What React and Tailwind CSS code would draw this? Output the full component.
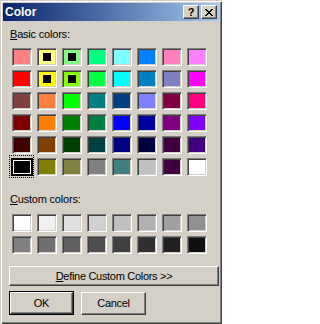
import React from 'react';

const BASIC = [
  ['#ff8080', '#ffff80', '#80ff80', '#00ff80', '#80ffff', '#0080ff', '#ff80c0', '#ff80ff'],
  ['#ff0000', '#ffff00', '#80ff00', '#00ff40', '#00ffff', '#0080c0', '#8080c0', '#ff00ff'],
  ['#804040', '#ff8040', '#00ff00', '#008080', '#004080', '#8080ff', '#800040', '#ff0080'],
  ['#800000', '#ff8000', '#008000', '#008040', '#0000ff', '#0000a0', '#800080', '#8000ff'],
  ['#400000', '#804000', '#004000', '#004040', '#000080', '#000040', '#400040', '#400080'],
  ['#000000', '#808000', '#808040', '#808080', '#408080', '#c0c0c0', '#400040', '#ffffff'],
];

const CUSTOM = [
  '#ffffff', '#f0f0f0', '#e0e0e0', '#d0d0d0', '#c0c0c0', '#b0b0b0', '#a0a0a0', '#909090',
  '#808080', '#707070', '#606060', '#505050', '#404040', '#303030', '#202020', '#101010',
];

// cells that show a little black marker in the middle
const MARKED = ['0-1', '0-2', '1-1', '1-2'];

const Swatch = ({ color, marked, selected }) => {
  if (selected) {
    return (
      <div className="relative w-[20px] h-[18px]">
        <div className="absolute -top-[3px] -left-[3px] -right-[2px] -bottom-[2px] border border-dotted border-black" />
        <div className="absolute -left-[1px] -right-[1px] top-0 bottom-0 border-2 border-black bg-white p-px">
          <div className="w-full h-full" style={{ backgroundColor: color }} />
        </div>
      </div>
    );
  }
  return (
    <div
      className="w-[20px] h-[18px] border border-t-[#808080] border-l-[#808080] border-b-white border-r-white shadow-[inset_1px_1px_0_#404040,inset_-1px_-1px_0_#d4d0c8] flex items-center justify-center"
      style={{ backgroundColor: color }}
    >
      {marked && <div className="w-[8px] h-[8px] bg-black" />}
    </div>
  );
};

const CloseGlyph = () => (
  <svg width="8" height="7" viewBox="0 0 8 7" shapeRendering="crispEdges">
    <path
      d="M0 0h2v1H0zM6 0h2v1H6zM1 1h2v1H1zM5 1h2v1H5zM2 2h4v1H2zM3 3h2v1H3zM2 4h4v1H2zM1 5h2v1H1zM5 5h2v1H5zM0 6h2v1H0zM6 6h2v1H6z"
      fill="#000"
    />
  </svg>
);

const TitleButton = ({ children }) => (
  <div className="w-[16px] h-[14px] bg-[#d4d0c8] border border-t-white border-l-white border-b-[#404040] border-r-[#404040] shadow-[inset_-1px_-1px_0_#808080] flex items-center justify-center">
    {children}
  </div>
);

const Button = ({ children, isDefault, className = '' }) => (
  <div className={`${isDefault ? 'border border-black' : ''} ${className}`}>
    <div className="h-full border border-t-white border-l-white border-b-[#404040] border-r-[#404040] shadow-[inset_-1px_-1px_0_#808080] flex items-center justify-center text-[11px] leading-none text-black">
      {children}
    </div>
  </div>
);

export default function App() {
  return (
    <div className="w-[222px] h-[324px] bg-[#d4d0c8] p-[3px] flex flex-col shadow-[inset_1px_1px_0_#d4d0c8,inset_2px_2px_0_#fff,inset_-1px_-1px_0_#404040,inset_-2px_-2px_0_#808080] font-['Liberation_Sans',Arial,sans-serif] select-none">
      {/* Title bar */}
      <div className="h-[18px] bg-gradient-to-r from-[#0a246a] to-[#a6caf0] flex items-center justify-between pl-[2px] pr-[2px]">
        <span className="text-white font-bold text-[12px] leading-none">Color</span>
        <div className="flex gap-[2px]">
          <TitleButton>
            <span className="font-bold text-[11px] leading-none text-black">?</span>
          </TitleButton>
          <TitleButton>
            <CloseGlyph />
          </TitleButton>
        </div>
      </div>

      {/* Body */}
      <div className="flex flex-col pt-[7px] pl-[7px] text-[11px] text-black tracking-[-0.2px]">
        <div className="h-[13px] leading-[13px]">
          <span className="underline underline-offset-1">B</span>asic colors:
        </div>
        <div className="grid grid-cols-[repeat(8,20px)] gap-x-[5px] gap-y-[4px] mt-[7px] ml-[2px]">
          {BASIC.map((row, r) =>
            row.map((c, i) => (
              <Swatch
                key={`${r}-${i}`}
                color={c}
                marked={MARKED.includes(`${r}-${i}`)}
                selected={r === 5 && i === 0}
              />
            ))
          )}
        </div>

        <div className="h-[13px] leading-[13px] mt-[17px]">
          <span className="underline underline-offset-1">C</span>ustom colors:
        </div>
        <div className="grid grid-cols-[repeat(8,20px)] gap-x-[5px] gap-y-[4px] mt-[8px] ml-[2px]">
          {CUSTOM.map((c, i) => (
            <Swatch key={i} color={c} />
          ))}
        </div>
      </div>

      <div className="flex flex-col pl-[6px] tracking-[-0.3px]">
        <Button className="w-[210px] h-[20px] mt-[12px]">
          <span className="underline underline-offset-1">D</span>efine Custom Colors &gt;&gt;
        </Button>
        <div className="flex gap-[7px] mt-[5px]">
          <Button isDefault className="w-[65px] h-[24px]">OK</Button>
          <Button className="w-[65px] h-[23px] mt-px">Cancel</Button>
        </div>
      </div>
    </div>
  );
}
